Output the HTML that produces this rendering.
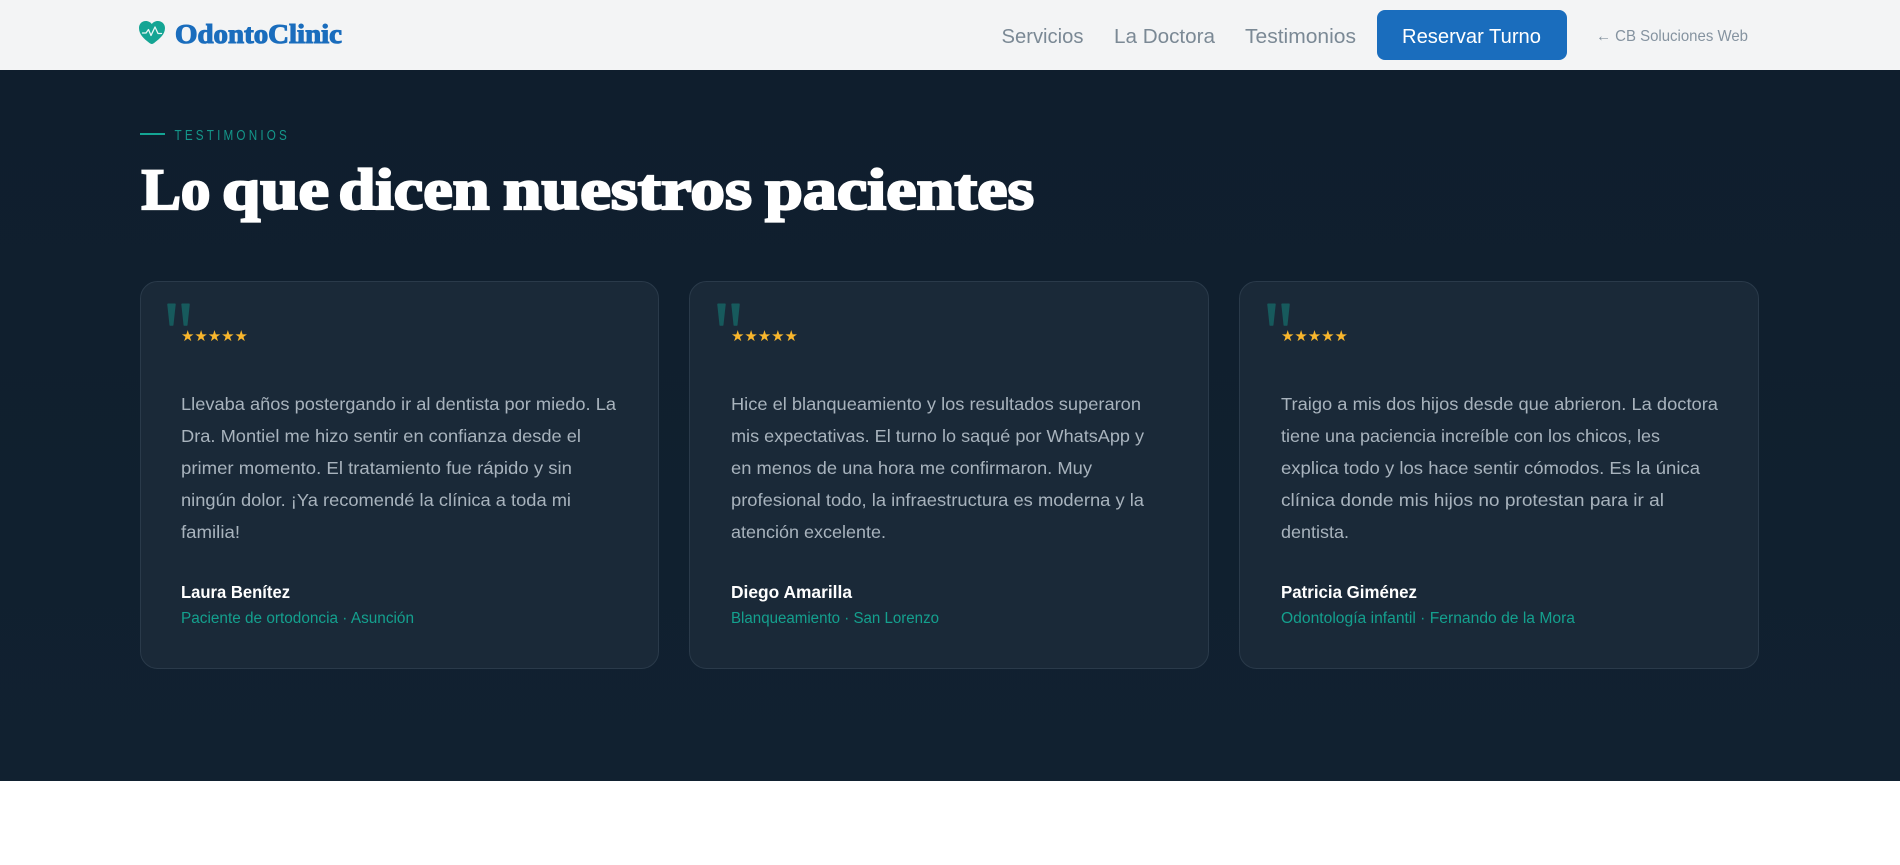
<!DOCTYPE html>
<html lang="es">
<head>
<meta charset="utf-8">
<title>OdontoClinic</title>
<style>
html,body{margin:0;padding:0;background:#fff;width:1900px;height:865px;overflow:hidden}
svg{display:block}
.b{font-family:"Liberation Sans",sans-serif}
.t{font-family:"Liberation Sans",sans-serif;font-size:17.5px;fill:#a8b3bd}
.n{font-family:"Liberation Sans",sans-serif;font-size:17.5px;font-weight:700;fill:#fff}
.s{font-family:"Liberation Sans",sans-serif;font-size:15.5px;fill:#14a08e}
.nav{font-family:"Liberation Sans",sans-serif;font-size:20px;fill:#7b8995}
.q{font-family:"Liberation Serif",serif;font-size:88px;fill:#175a5d;stroke:#175a5d;stroke-width:1.500;stroke-linejoin:round}
.st{font-family:"DejaVu Sans",sans-serif;font-size:15px;fill:#f8b62d}
.h{font-family:"Liberation Serif",serif;font-size:58px;font-weight:700;fill:#fff;stroke:#fff;stroke-width:2.200}
</style>
</head>
<body>
<svg width="1900" height="865" viewBox="0 0 1900 865" xmlns="http://www.w3.org/2000/svg">
<defs>
<linearGradient id="bg" x1="0" y1="0" x2="0" y2="1"><stop offset="0" stop-color="#0f1e2d"/><stop offset="1" stop-color="#112130"/></linearGradient>
</defs>
<rect width="1900" height="865" fill="#fff"/>
<rect width="1900" height="70" fill="#f3f4f5"/>
<rect y="70" width="1900" height="711" fill="url(#bg)"/>

<path d="M151.800 44 C150.800 44 149.800 43.200 148.500 42.200 C144 38.800 139 34.500 139 28 C139 23.800 142 21 145.800 21 C148.300 21 150.500 22.200 151.800 24 C153.100 22.200 155.300 21 157.800 21 C161.600 21 165 23.800 165 28 C165 34.500 159.500 38.800 155 42.200 C153.800 43.200 152.800 44 151.800 44Z" fill="#14a594"/>
<path d="M142.500 33 H146 L148.500 29.500 L151 35.500 L155 27 L158 33.500 H161.500" fill="none" stroke="#e8f7f5" stroke-width="1.300" stroke-linejoin="round" stroke-linecap="round"/>
<text x="175" y="43" font-family="Liberation Serif,serif" font-size="27" font-weight="700" fill="#1a6dbd" stroke="#1a6dbd" stroke-width="1.100" textLength="167" lengthAdjust="spacingAndGlyphs">OdontoClinic</text>

<text class="nav" x="1001.500" y="43" textLength="82" lengthAdjust="spacingAndGlyphs">Servicios</text>
<text class="nav" x="1114" y="43" textLength="101" lengthAdjust="spacingAndGlyphs">La Doctora</text>
<text class="nav" x="1245" y="43" textLength="111" lengthAdjust="spacingAndGlyphs">Testimonios</text>
<rect x="1377" y="10" width="190" height="50" rx="8" fill="#1a6dbd"/>
<text class="b" x="1402" y="43" font-size="20" fill="#fff" textLength="139" lengthAdjust="spacingAndGlyphs">Reservar Turno</text>
<text class="b" x="1596" y="41" font-size="16" fill="#8593a0" textLength="152" lengthAdjust="spacingAndGlyphs">← CB Soluciones Web</text>

<rect x="140" y="133" width="25" height="2" fill="#14a594"/>
<text class="b" transform="translate(174.500 140) scale(.78 1)" font-size="15" fill="#14978a" textLength="144" lengthAdjust="spacing">TESTIMONIOS</text>
<text class="h" x="141.500" y="209" textLength="69" lengthAdjust="spacingAndGlyphs">Lo</text>
<text class="h" x="222" y="209" textLength="107" lengthAdjust="spacingAndGlyphs">que</text>
<text class="h" x="338.500" y="209" textLength="151" lengthAdjust="spacingAndGlyphs">dicen</text>
<text class="h" x="503" y="209" textLength="249" lengthAdjust="spacingAndGlyphs">nuestros</text>
<text class="h" x="765" y="209" textLength="269" lengthAdjust="spacingAndGlyphs">pacientes</text>

<rect x="140.500" y="281.500" width="518" height="387" rx="17" fill="#1a2938" stroke="#2a3a4a"/>
<rect x="689.500" y="281.500" width="519" height="387" rx="17" fill="#1a2938" stroke="#2a3a4a"/>
<rect x="1239.500" y="281.500" width="519" height="387" rx="17" fill="#1a2938" stroke="#2a3a4a"/>

<text class="q" transform="translate(163.300 362) scale(.85 1)">"</text>
<text class="st" x="181" y="341" textLength="67">★★★★★</text>
<text class="t" x="181" y="410" textLength="435" lengthAdjust="spacingAndGlyphs">Llevaba años postergando ir al dentista por miedo. La</text>
<text class="t" x="181" y="442" textLength="400" lengthAdjust="spacingAndGlyphs">Dra. Montiel me hizo sentir en confianza desde el</text>
<text class="t" x="181" y="474" textLength="391" lengthAdjust="spacingAndGlyphs">primer momento. El tratamiento fue rápido y sin</text>
<text class="t" x="181" y="506" textLength="390" lengthAdjust="spacingAndGlyphs">ningún dolor. ¡Ya recomendé la clínica a toda mi</text>
<text class="t" x="181" y="538" textLength="59" lengthAdjust="spacingAndGlyphs">familia!</text>
<text class="n" x="181" y="598" textLength="109" lengthAdjust="spacingAndGlyphs">Laura Benítez</text>
<text class="s" x="181" y="623" textLength="233" lengthAdjust="spacingAndGlyphs">Paciente de ortodoncia · Asunción</text>

<text class="q" transform="translate(713.300 362) scale(.85 1)">"</text>
<text class="st" x="731" y="341" textLength="67">★★★★★</text>
<text class="t" x="731" y="410" textLength="410" lengthAdjust="spacingAndGlyphs">Hice el blanqueamiento y los resultados superaron</text>
<text class="t" x="731" y="442" textLength="413" lengthAdjust="spacingAndGlyphs">mis expectativas. El turno lo saqué por WhatsApp y</text>
<text class="t" x="731" y="474" textLength="361" lengthAdjust="spacingAndGlyphs">en menos de una hora me confirmaron. Muy</text>
<text class="t" x="731" y="506" textLength="413" lengthAdjust="spacingAndGlyphs">profesional todo, la infraestructura es moderna y la</text>
<text class="t" x="731" y="538" textLength="155" lengthAdjust="spacingAndGlyphs">atención excelente.</text>
<text class="n" x="731" y="598" textLength="121" lengthAdjust="spacingAndGlyphs">Diego Amarilla</text>
<text class="s" x="731" y="623" textLength="208" lengthAdjust="spacingAndGlyphs">Blanqueamiento · San Lorenzo</text>

<text class="q" transform="translate(1263.300 362) scale(.85 1)">"</text>
<text class="st" x="1281" y="341" textLength="67">★★★★★</text>
<text class="t" x="1281" y="410" textLength="437" lengthAdjust="spacingAndGlyphs">Traigo a mis dos hijos desde que abrieron. La doctora</text>
<text class="t" x="1281" y="442" textLength="379" lengthAdjust="spacingAndGlyphs">tiene una paciencia increíble con los chicos, les</text>
<text class="t" x="1281" y="474" textLength="419" lengthAdjust="spacingAndGlyphs">explica todo y los hace sentir cómodos. Es la única</text>
<text class="t" x="1281" y="506" textLength="383" lengthAdjust="spacingAndGlyphs">clínica donde mis hijos no protestan para ir al</text>
<text class="t" x="1281" y="538" textLength="68" lengthAdjust="spacingAndGlyphs">dentista.</text>
<text class="n" x="1281" y="598" textLength="136" lengthAdjust="spacingAndGlyphs">Patricia Giménez</text>
<text class="s" x="1281" y="623" textLength="294" lengthAdjust="spacingAndGlyphs">Odontología infantil · Fernando de la Mora</text>
</svg>
</body>
</html>
